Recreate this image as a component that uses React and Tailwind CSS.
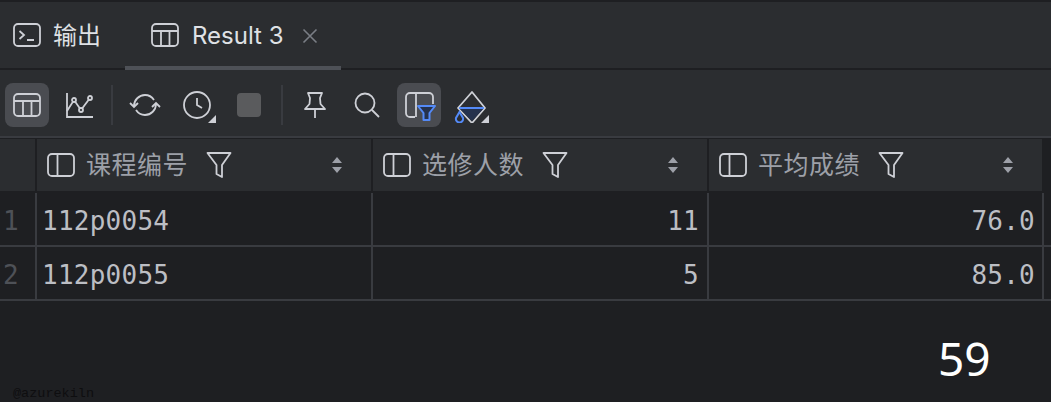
const cjk = "font-['Inter','Noto_Sans_CJK_SC',sans-serif]";

const Ic = ({ w = 28, h = 28, children, className = "" }) => (
  <svg width={w} height={h} viewBox={`0 0 ${w} ${h}`} fill="none" stroke="#ced0d6" strokeWidth="1.8" className={`shrink-0 ${className}`}>
    {children}
  </svg>
);

const TableIcon = () => (
  <Ic>
    <rect x="1" y="3" width="26" height="22" rx="4" />
    <path d="M1 10H27M10 10V25M18.5 10V25" />
  </Ic>
);

const Caret = () => (
  <svg width="8" height="8" viewBox="0 0 8 8" className="absolute right-[3px] bottom-[4px]">
    <path d="M8 0V8H0Z" fill="#ced0d6" />
  </svg>
);

const ToolBtn = ({ active, children, className = "" }) => (
  <div className={`relative w-[44px] h-[44px] rounded-[8px] flex items-center justify-center ${active ? "bg-[#4a4c51]" : ""} ${className}`}>
    {children}
  </div>
);

const Sep = () => <div className="w-[2px] h-[40px] bg-[#393b40]" />;

const Header = ({ label, w = "w-[336px] pr-[29px]" }) => (
  <div className={`${w} h-full shrink-0 bg-[#2b2d30] flex items-center pl-[10px] border-r-2 border-[#1e1f22]`}>
    <svg width="28" height="24" viewBox="0 0 28 24" fill="none" stroke="#ced0d6" strokeWidth="1.8" className="shrink-0">
      <rect x="1" y="1" width="26" height="22" rx="4" />
      <path d="M10.5 1V23" />
    </svg>
    <span className={`ml-[11px] text-[25px] leading-none tracking-[0.5px] text-[#9da0a8] ${cjk}`}>{label}</span>
    <svg width="26" height="28" viewBox="0 0 26 28" fill="none" stroke="#ced0d6" strokeWidth="1.8" className="ml-[18px] shrink-0">
      <path d="M1.5 2H24.5L16 14V26L10.5 23V14Z" strokeLinejoin="round" />
    </svg>
    <svg width="10" height="16" viewBox="0 0 10 16" className="ml-auto shrink-0">
      <path d="M5 0L10 6H0Z M5 16L0 10H10Z" fill="#9da0a8" />
    </svg>
  </div>
);

const Cell = ({ align = "pl-[5px]", children, w = "w-[336px]" }) => (
  <div className={`${w} h-full shrink-0 border-r-2 border-[#393b40] flex items-center pt-[3px] text-[26px] leading-none text-[#bcbec4] font-['DejaVu_Sans_Mono',monospace] ${align}`}>
    <span className="tracking-[0.25px]">{children}</span>
  </div>
);

const Row = ({ n, a, b, c }) => (
  <div className="flex h-[54px] border-b-2 border-[#393b40]">
    <div className="w-[37px] shrink-0 border-r-2 border-[#393b40] pl-[3px] pt-[3px] flex items-center text-[26px] leading-none text-[#4e5157] font-['DejaVu_Sans_Mono',monospace]">{n}</div>
    <Cell>{a}</Cell>
    <Cell align="justify-end pr-[8px]">{b}</Cell>
    <Cell align="justify-end pr-[7px]" w="w-[335px]">{c}</Cell>
  </div>
);

export default function App() {
  return (
    <div className="relative w-[1051px] h-[402px] overflow-hidden bg-[#1e1f22]">
      {/* Tabs */}
      <div className="h-[70px] bg-[#2b2d30] border-t-2 border-b-2 border-t-[#1e1f22] border-b-[#1e1f22] flex items-stretch">
        <div className="w-[125px] flex items-center pl-[13px] pt-[2px] gap-[12px]">
          <Ic>
            <rect x="1" y="2" width="26" height="22" rx="4" />
            <path d="M6.5 9L11 13L6.5 17M14 18H21" />
          </Ic>
          <span className={`text-[24px] leading-none text-[#dfe1e5] ${cjk}`}>输出</span>
        </div>
        <div className="relative w-[216px] flex items-center pl-[26px] pt-[2px]">
          <Ic><rect x="1" y="2" width="26" height="22" rx="4" /><path d="M1 9H27M10 9V24M18.5 9V24" /></Ic>
          <span className="ml-[13px] text-[24px] leading-none text-[#dfe1e5] font-['Inter',sans-serif]">Result 3</span>
          <svg width="16" height="16" viewBox="0 0 16 16" stroke="#7a7e85" strokeWidth="1.6" className="ml-[18px]">
            <path d="M1.5 1.5L14.5 14.5M14.5 1.5L1.5 14.5" />
          </svg>
          <div className="absolute left-0 right-0 bottom-[-2px] h-[4px] bg-[#4e5157]" />
        </div>
      </div>

      {/* Toolbar */}
      <div className="h-[68px] bg-[#2b2d30] border-b-2 border-[#393b40] flex items-center pl-[5px] pt-[3px]">
        <ToolBtn active><TableIcon /></ToolBtn>
        <ToolBtn className="ml-[8px]">
          <Ic>
            <path d="M2 2V26H28" />
            <path d="M2 20L9 9L16 19L25 7" />
            <circle cx="9" cy="9" r="2" fill="#2b2d30" />
            <circle cx="16" cy="19" r="2" fill="#2b2d30" />
            <circle cx="25" cy="7" r="2" fill="#2b2d30" />
          </Ic>
        </ToolBtn>
        <div className="ml-[10px]"><Sep /></div>
        <ToolBtn className="ml-[10px]">
          <svg width="32" height="28" viewBox="0 0 32 28" fill="none" stroke="#ced0d6" strokeWidth="1.8">
            <path d="M5 15C5 9 10 4 16 4C20 4 23 6 25 9M27 13C27 19 22 24 16 24C12 24 9 22 7 19" />
            <path d="M1 12L5 16L9 12M23 16L27 12L31 16" />
          </svg>
        </ToolBtn>
        <ToolBtn className="ml-[8px]">
          <Ic>
            <circle cx="14" cy="14" r="13" />
            <path d="M14 7V14L19 17" />
          </Ic>
          <Caret />
        </ToolBtn>
        <div className="ml-[18px] w-[24px] h-[24px] rounded-[4px] bg-[#5a5b5d]" />
        <div className="ml-[20px]"><Sep /></div>
        <ToolBtn className="ml-[10px]">
          <svg width="22" height="28" viewBox="0 0 22 28" fill="none" stroke="#ced0d6" strokeWidth="1.8" strokeLinejoin="round">
            <path d="M4 2H18L16 7L16.5 13L21 18H1L5.5 13L6 7Z" />
            <path d="M11 18V27" />
          </svg>
        </ToolBtn>
        <ToolBtn className="ml-[8px]">
          <svg width="26" height="26" viewBox="0 0 26 26" fill="none" stroke="#ced0d6" strokeWidth="1.8">
            <circle cx="11" cy="11" r="9.5" />
            <path d="M18 18L25 25" />
          </svg>
        </ToolBtn>
        <ToolBtn active className="ml-[8px]">
          <svg width="44" height="44" viewBox="0 0 44 44" fill="none" strokeWidth="1.8">
            <path d="M18 34H13A4 4 0 0 1 9 30V14A4 4 0 0 1 13 10H32A4 4 0 0 1 36 14V21M19 10V34" stroke="#ced0d6" />
            <path d="M21 23H38L32.5 30V37H26.5V30Z" stroke="#548af7" strokeWidth="2" fill="#25324d" strokeLinejoin="round" />
          </svg>
        </ToolBtn>
        <ToolBtn className="ml-[7px]">
          <svg width="36" height="36" viewBox="0 0 36 36" fill="none">
            <path d="M6 21L20 36L33 21L20 5Z" stroke="#ced0d6" strokeWidth="1.8" strokeLinejoin="round" />
            <path d="M8 22H31L20 34Z" fill="#25324d" />
            <path d="M7 21H32" stroke="#548af7" strokeWidth="2" />
            <path d="M7.5 25L11 31A3.6 3.6 0 1 1 4 31Z" stroke="#548af7" strokeWidth="2" />
          </svg>
          <Caret />
        </ToolBtn>
      </div>

      {/* Table */}
      <div className="flex h-[54px] mt-[1px] border-b-2 border-[#1e1f22]">
        <div className="w-[37px] shrink-0 h-full bg-[#2b2d30] border-r-2 border-[#1e1f22]" />
        <Header label="课程编号" />
        <Header label="选修人数" />
        <Header label="平均成绩" w="w-[335px] pr-[29px]" />
      </div>
      <Row n="1" a="112p0054" b="11" c="76.0" />
      <Row n="2" a="112p0055" b="5" c="85.0" />

      {/* Overlays */}
      <div className="absolute left-[938px] top-[328px] text-[46px] leading-[60px] text-white font-['Noto_Sans',sans-serif]">59</div>
      <div className="absolute left-[13px] top-[385px] text-[13.5px] leading-[18px] text-[#0e0e10] font-['Liberation_Mono',monospace]">@azurekiln</div>
    </div>
  );
}
